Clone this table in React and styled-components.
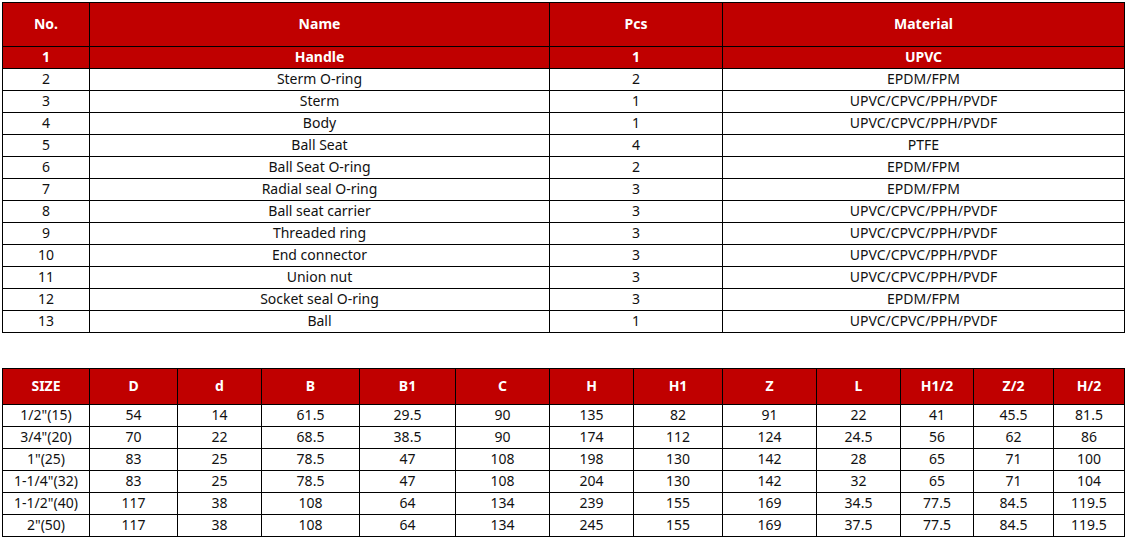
import React from "react";
import styled, { createGlobalStyle } from "styled-components";

const Global = createGlobalStyle`
  html, body { margin: 0; padding: 0; background: #fff; }
  body { font-family: "Noto Sans", "Open Sans", Arial, sans-serif; }
`;

const Page = styled.div`
  padding: 2px 0 0 2px;
  display: flex;
  flex-direction: column;
  gap: 35px;
  width: 1123px;
`;

const Table = styled.table`
  border-collapse: collapse;
  table-layout: fixed;
  width: 1123px;
  font-size: 14px;
  color: #111;
`;

const Cell = styled.td`
  border: 1px solid #000;
  text-align: center;
  padding: 0 0 2px 0;
  line-height: 18px;
  white-space: nowrap;
  overflow: hidden;
`;

const HeadCell = styled.th`
  border: 1px solid #000;
  background: #c00000;
  color: #fff;
  font-weight: 700;
  text-align: center;
  padding: 0 0 2px 0;
  line-height: 18px;
  white-space: nowrap;
`;

const Row = styled.tr`
  height: 22px;
  ${(p) =>
    p.$hl &&
    `
    background: #c00000;
    color: #fff;
    font-weight: 700;
  `}
`;

const HeadRow = styled.tr`
  height: ${(p) => p.$h}px;
`;

const parts = [
  ["1", "Handle", "1", "UPVC"],
  ["2", "Sterm O-ring", "2", "EPDM/FPM"],
  ["3", "Sterm", "1", "UPVC/CPVC/PPH/PVDF"],
  ["4", "Body", "1", "UPVC/CPVC/PPH/PVDF"],
  ["5", "Ball Seat", "4", "PTFE"],
  ["6", "Ball Seat O-ring", "2", "EPDM/FPM"],
  ["7", "Radial seal O-ring", "3", "EPDM/FPM"],
  ["8", "Ball seat carrier", "3", "UPVC/CPVC/PPH/PVDF"],
  ["9", "Threaded ring", "3", "UPVC/CPVC/PPH/PVDF"],
  ["10", "End connector", "3", "UPVC/CPVC/PPH/PVDF"],
  ["11", "Union nut", "3", "UPVC/CPVC/PPH/PVDF"],
  ["12", "Socket seal O-ring", "3", "EPDM/FPM"],
  ["13", "Ball", "1", "UPVC/CPVC/PPH/PVDF"],
];

const partCols = [87, 460, 173, 402];

const sizeHead = ["SIZE", "D", "d", "B", "B1", "C", "H", "H1", "Z", "L", "H1/2", "Z/2", "H/2"];
const sizeCols = [87, 88, 84, 98, 96, 94, 84, 89, 94, 84, 73, 80, 71];
const sizes = [
  ['1/2"(15)', "54", "14", "61.5", "29.5", "90", "135", "82", "91", "22", "41", "45.5", "81.5"],
  ['3/4"(20)', "70", "22", "68.5", "38.5", "90", "174", "112", "124", "24.5", "56", "62", "86"],
  ['1"(25)', "83", "25", "78.5", "47", "108", "198", "130", "142", "28", "65", "71", "100"],
  ['1-1/4"(32)', "83", "25", "78.5", "47", "108", "204", "130", "142", "32", "65", "71", "104"],
  ['1-1/2"(40)', "117", "38", "108", "64", "134", "239", "155", "169", "34.5", "77.5", "84.5", "119.5"],
  ['2"(50)', "117", "38", "108", "64", "134", "245", "155", "169", "37.5", "77.5", "84.5", "119.5"],
];

export default function App() {
  return (
    <>
      <Global />
      <Page>
        <Table>
          <colgroup>
            {partCols.map((w, i) => (
              <col key={i} style={{ width: w }} />
            ))}
          </colgroup>
          <thead>
            <HeadRow $h={44}>
              <HeadCell>No.</HeadCell>
              <HeadCell>Name</HeadCell>
              <HeadCell>Pcs</HeadCell>
              <HeadCell>Material</HeadCell>
            </HeadRow>
          </thead>
          <tbody>
            {parts.map((r, i) => (
              <Row key={i} $hl={i === 0}>
                {r.map((c, j) => (
                  <Cell key={j}>{c}</Cell>
                ))}
              </Row>
            ))}
          </tbody>
        </Table>
        <Table>
          <colgroup>
            {sizeCols.map((w, i) => (
              <col key={i} style={{ width: w }} />
            ))}
          </colgroup>
          <thead>
            <HeadRow $h={36}>
              {sizeHead.map((h) => (
                <HeadCell key={h}>{h}</HeadCell>
              ))}
            </HeadRow>
          </thead>
          <tbody>
            {sizes.map((r, i) => (
              <Row key={i}>
                {r.map((c, j) => (
                  <Cell key={j}>{c}</Cell>
                ))}
              </Row>
            ))}
          </tbody>
        </Table>
      </Page>
    </>
  );
}
